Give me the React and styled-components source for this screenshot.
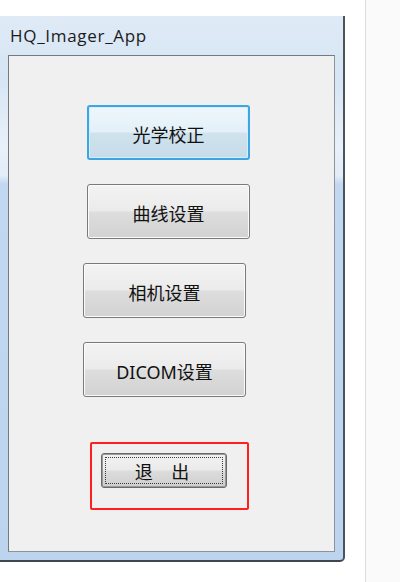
import React from 'react';
import styled, { createGlobalStyle } from 'styled-components';

const GlobalStyle = createGlobalStyle`
  html, body {
    margin: 0;
    padding: 0;
    background: #ffffff;
  }
  body {
    font-family: "Noto Sans", "Noto Sans CJK SC", sans-serif;
  }
`;

const buttons = [
  { label: '光学校正', indent: 78, active: true },
  { label: '曲线设置', indent: 78 },
  { label: '相机设置', indent: 74 },
  { label: 'DICOM设置', indent: 74 },
];

export default function App() {
  return (
    <>
      <GlobalStyle />
      <Screen>
        <Window>
          <TitleBar>HQ_Imager_App</TitleBar>
          <Client>
            {buttons.map((b) => (
              <PushButton key={b.label} $indent={b.indent} $active={b.active}>
                {b.label}
              </PushButton>
            ))}
            <Highlight>
              <ExitButton>
                <FocusRect>退 出</FocusRect>
              </ExitButton>
            </Highlight>
          </Client>
        </Window>
        <Gutter />
        <SidePanel />
      </Screen>
    </>
  );
}

//page row
const Screen = styled.div`
  display: flex;
  width: 400px;
  height: 582px;
  overflow: hidden;
  background: #ffffff;
`;

//Win7 frame
const Window = styled.div`
  width: 345px;
  height: 546px;
  margin-top: 16px;
  flex-shrink: 0;
  display: flex;
  flex-direction: column;
  box-sizing: border-box;
  border-right: 2px solid #4b545e;
  border-bottom: 2px solid #3e4650;
  border-bottom-right-radius: 5px;
  background: linear-gradient(
    to bottom,
    #dfeaf6 0px,
    #d6e5f4 60px,
    #e8f0f9 130px,
    #e3ecf7 160px,
    #c2d8f0 168px,
    #bcd4ee 100%
  );
`;

const TitleBar = styled.div`
  height: 39px;
  padding-left: 10px;
  display: flex;
  align-items: center;
  font-family: "Open Sans", "Noto Sans", sans-serif;
  font-size: 17px;
  letter-spacing: 0.7px;
  color: #1b1b1b;
  box-sizing: border-box;
  padding-bottom: 1px;
`;

const Client = styled.div`
  flex: 1;
  margin: 0 8px 8px 8px;
  display: flex;
  flex-direction: column;
  align-items: flex-start;
  padding-top: 49px;
  box-sizing: border-box;
  background: #f0f0f0;
  border: 1px solid #747a82;
  border-right-color: #8d939a;
  border-bottom-color: #8d939a;
`;

const PushButton = styled.button`
  width: 163px;
  height: 55px;
  margin: 0 0 24px ${(p) => p.$indent}px;
  padding: 2px 0 0;
  box-sizing: border-box;
  border-radius: 3px;
  font-family: "Noto Sans", "Noto Sans CJK SC", sans-serif;
  font-size: 18px;
  color: #111;
  cursor: pointer;
  border: ${(p) => (p.$active ? '2px solid #3aa6e2' : '1px solid #7a7a7a')};
  box-shadow: inset 0 0 0 1px ${(p) => (p.$active ? '#d6eefb' : '#fbfbfb')};
  background: ${(p) =>
    p.$active
      ? 'linear-gradient(to bottom, #eef6fc 0%, #e3f0f9 48%, #cfe2ee 52%, #c6dbe8 100%)'
      : 'linear-gradient(to bottom, #f3f3f3 0%, #ebebeb 48%, #dddddd 52%, #d2d2d2 100%)'};
`;

//red annotation box
const Highlight = styled.div`
  width: 159px;
  height: 68px;
  margin: 21px 0 0 81px;
  box-sizing: border-box;
  border: 2px solid #ff1f1f;
  border-radius: 2px;
  padding: 9px 0 0 9px;
`;

const ExitButton = styled.button`
  width: 126px;
  height: 35px;
  padding: 3px;
  box-sizing: border-box;
  border: 1px solid #6a6a6a;
  border-radius: 3px;
  box-shadow: inset 0 0 0 1px #9a9a9a;
  background: linear-gradient(to bottom, #f2f2f2 0%, #ebebeb 48%, #dcdcdc 52%, #cfcfcf 100%);
  cursor: pointer;
  display: flex;
`;

const FocusRect = styled.span`
  flex: 1;
  display: flex;
  align-items: center;
  justify-content: center;
  border: 1px dotted #3c3c3c;
  font-family: "Noto Sans", "Noto Sans CJK SC", sans-serif;
  font-size: 18px;
  color: #111;
  word-spacing: 14px;
  white-space: pre;
  padding-right: 4px;
`;

const Gutter = styled.div`
  width: 20px;
  flex-shrink: 0;
  border-right: 1px solid #dcdcdc;
`;

const SidePanel = styled.div`
  flex: 1;
  background: #fafafa;
`;
